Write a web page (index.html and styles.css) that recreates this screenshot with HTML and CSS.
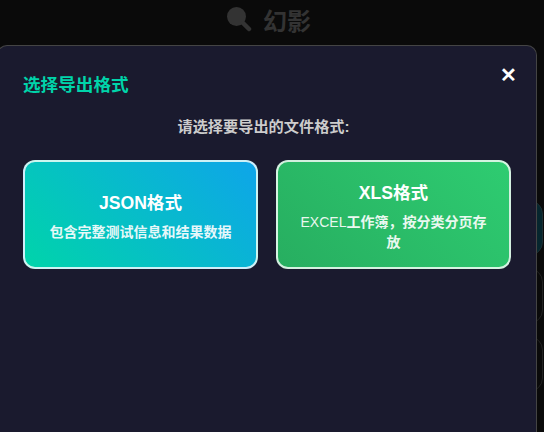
FILE: index.html
```html
<!DOCTYPE html>
<html lang="zh-CN">

<head>
  <meta charset="UTF-8" />
  <meta name="viewport" content="width=device-width, initial-scale=1.0" />
  <title>幻影</title>
  <link rel="stylesheet" href="styles.css">
</head>

<body>
  <header class="page-head">
    <svg class="logo-icon" viewBox="0 0 26 26" width="26" height="26" aria-hidden="true">
      <circle cx="10.5" cy="10.5" r="9.5" fill="#333" />
      <path d="M17 17l6 6" stroke="#333" stroke-width="4.5" stroke-linecap="round" />
    </svg>
    <span class="logo-text">幻影</span>
  </header>

  <div class="side-rings">
    <span class="ring ring-teal"></span>
    <span class="ring"></span>
    <span class="ring"></span>
  </div>

  <div class="modal">
    <a class="close" href="#">✕</a>
    <h2 class="modal-title">选择导出格式</h2>
    <p class="modal-tip">请选择要导出的文件格式:</p>
    <div class="format-list">
      <a class="format json" href="#">
        <strong>JSON格式</strong>
        <span>包含完整测试信息和结果数据</span>
      </a>
      <a class="format xls" href="#">
        <strong>XLS格式</strong>
        <span><em>EXCEL</em>工作簿，按分类分页存放</span>
      </a>
    </div>
  </div>
</body>

</html>
```

FILE: styles.css
```css
html, body, div, h2, p {
  padding: 0;
  margin: 0;
}
a {
  color: inherit;
  text-decoration: inherit;
}

html, body {
  height: 100%;
  overflow: hidden;
}

body {
  background-color: #0a0a0a;
  color: #fff;
  font-family: "Liberation Sans", "Noto Sans CJK SC", sans-serif;
}

.page-head {
  display: flex;
  justify-content: center;
  align-items: center;
  gap: 11px;
  height: 38px;
  padding-right: 7px;
}
.logo-text {
  font-size: 24px;
  font-weight: bold;
  color: #333;
}

.side-rings {
  position: absolute;
  left: 493px;
  top: 200px;
  display: flex;
  flex-direction: column;
  gap: 12px;
}
.ring {
  display: block;
  width: 50px;
  height: 56px;
  box-sizing: border-box;
  border: 1px solid #222;
  border-radius: 14px;
}
.ring-teal {
  background-color: #06262e;
  border-color: #1d2f33;
}

.modal {
  position: absolute;
  left: -3px;
  top: 45px;
  width: 540px;
  height: 387px;
  box-sizing: border-box;
  padding: 27px 25px 0;
  background-color: #1a1a2e;
  border: 1px solid #444;
  border-bottom: none;
  border-radius: 10px 10px 0 0;
}

.close {
  position: absolute;
  right: 19px;
  top: 15px;
  font-size: 20px;
  font-weight: bold;
  line-height: 28px;
  color: #fff;
}

.modal-title {
  font-size: 17.6px;
  line-height: 24px;
  font-weight: bold;
  color: #00d4aa;
}

.modal-tip {
  margin-top: 19px;
  padding-right: 7px;
  font-size: 15.2px;
  line-height: 22px;
  font-weight: bold;
  text-align: center;
  color: #ccc;
}

.format-list {
  display: flex;
  gap: 18px;
  margin-top: 22px;
}

.format {
  flex: 1;
  height: 109px;
  box-sizing: border-box;
  padding: 3px 20px 0;
  display: flex;
  flex-direction: column;
  justify-content: center;
  align-items: center;
  gap: 7px;
  text-align: center;
  border: 2px solid rgba(255, 255, 255, .8);
  border-radius: 12px;
}
.format strong {
  font-size: 17.6px;
  line-height: 24px;
}
.format span {
  font-size: 14px;
  line-height: 20px;
  font-weight: bold;
  opacity: .9;
}
.format em {
  font-style: normal;
  font-weight: normal;
}

.json {
  background: linear-gradient(45deg, #00d4aa, #0ea5e9);
}
.xls {
  background: linear-gradient(45deg, #27ae60, #2ecc71);
}
```
